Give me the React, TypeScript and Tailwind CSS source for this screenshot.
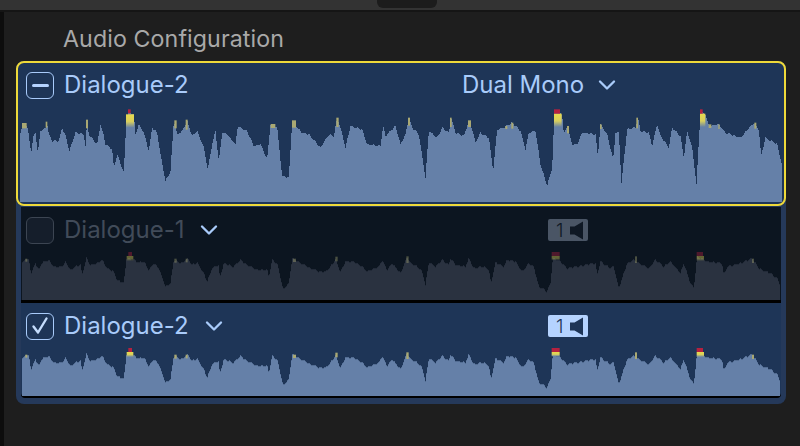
import React, { useId } from 'react';
import { ChevronDown } from 'lucide-react';

type Pt = [number, number];
type Tip = [number, number, number, number, string];

const Y = '#a9a873';
const H = 'hot';
const R = '#b5213f';

const topWave: Pt[] = [
    [60, 395], [66, 370], [80, 375], [85, 405], [92, 455], [98, 410], [105, 395], [112, 455], [120, 390], [135, 380], [140, 365], [145, 400], [155, 420], [175, 420], [185, 380], [195, 405], [207, 450], [225, 395], [250, 400], [255, 435], [260, 360], [265, 400], [290, 430], [300, 370], [310, 405], [315, 430], [335, 445], [340, 500], [350, 460], [370, 515], [378, 350], [385, 335], [400, 340], [405, 400], [415, 370], [430, 395], [445, 450], [455, 380], [470, 395], [480, 460], [495, 540], [510, 510], [520, 360], [530, 400], [545, 390], [560, 360], [575, 405], [590, 390], [610, 440], [622, 505], [635, 430], [645, 390], [655, 480], [665, 395], [680, 400], [705, 430], [712, 375], [740, 390], [760, 435], [780, 430], [800, 475], [810, 370], [830, 380], [845, 525], [865, 530], [875, 360], [890, 380], [905, 395], [925, 400], [960, 440], [985, 400], [1000, 405], [1010, 350], [1020, 380], [1035, 440], [1050, 375], [1085, 385], [1100, 430], [1140, 435], [1148, 375], [1155, 405], [1185, 375],
    [1200, 430], [1215, 400], [1225, 350], [1235, 380], [1255, 400], [1265, 465], [1275, 530], [1285, 390], [1310, 410], [1325, 380], [1345, 395], [1352, 350], [1365, 395], [1390, 405], [1405, 360], [1415, 385], [1425, 425], [1440, 395], [1465, 410], [1478, 510], [1490, 385], [1510, 380], [1535, 365], [1560, 390], [1575, 445], [1585, 395], [1605, 390], [1620, 490], [1640, 555], [1655, 500], [1662, 330], [1685, 340], [1690, 400], [1700, 375], [1715, 430], [1730, 430], [1745, 395], [1785, 400], [1792, 465], [1800, 370], [1820, 400], [1838, 475], [1845, 395], [1855, 395], [1863, 545], [1880, 385], [1905, 380], [1912, 350], [1920, 390], [1945, 395], [1955, 435], [1970, 370], [1980, 405], [2005, 440], [2015, 380], [2040, 405], [2050, 470], [2060, 390], [2075, 440], [2088, 550], [2100, 330], [2115, 340], [2125, 375], [2155, 370], [2175, 395], [2220, 410], [2260, 365], [2275, 385], [2282, 465], [2295, 410], [2330, 430], [2345, 495],
];

const topTips: Tip[] = [
    [66, 366, 14, 16, Y], [137, 362, 5, 18, Y], [258, 356, 6, 26, Y], [378, 340, 24, 40, H], [384, 325, 8, 12, R], [523, 358, 7, 24, Y], [557, 356, 6, 30, Y], [812, 369, 14, 12, Y], [876, 358, 12, 22, Y], [1009, 350, 7, 28, Y], [1224, 350, 6, 24, Y], [1350, 350, 5, 28, Y], [1404, 358, 9, 20, Y], [1516, 375, 6, 9, Y], [1534, 365, 6, 18, Y], [1662, 338, 23, 40, H], [1662, 325, 18, 13, R], [1701, 375, 6, 22, Y], [1800, 370, 5, 14, Y], [1909, 350, 5, 32, Y], [2100, 338, 16, 40, H], [2100, 325, 8, 13, R], [2126, 370, 8, 11, Y], [2155, 370, 4, 14, Y], [2263, 365, 6, 18, Y],
];

const lowerWave: Pt[] = [
    [66, 480], [75, 465], [85, 470], [92, 510], [105, 480], [115, 500], [125, 478], [145, 470], [160, 490], [185, 490], [195, 475], [210, 500], [225, 490], [240, 485], [245, 515], [258, 465], [270, 485], [290, 480], [305, 470], [320, 495], [340, 505], [350, 530], [370, 540], [378, 465], [400, 470], [415, 478], [430, 475], [445, 500], [460, 480], [475, 495], [495, 550], [510, 540], [520, 470], [545, 480], [560, 465], [575, 485], [590, 478], [610, 510], [620, 535], [635, 495], [655, 485], [658, 525], [670, 480], [700, 490], [720, 470], [740, 485], [770, 500], [800, 500], [805, 520], [815, 470], [830, 480], [848, 558], [865, 540], [875, 465], [900, 480], [930, 495], [955, 505], [975, 505], [990, 490], [1005, 470], [1020, 505], [1035, 475], [1060, 475], [1085, 490], [1100, 505], [1135, 490], [1145, 470], [1160, 500], [1175, 480],
    [1200, 510], [1220, 460], [1230, 480], [1250, 490], [1265, 505], [1275, 545], [1285, 478], [1305, 490], [1325, 470], [1345, 485], [1350, 465], [1365, 485], [1395, 490], [1405, 465], [1420, 495], [1450, 490], [1465, 500], [1472, 540], [1485, 478], [1510, 490], [1520, 470], [1545, 475], [1565, 505], [1585, 480], [1600, 490], [1615, 550], [1640, 565], [1650, 540], [1657, 465], [1680, 475], [1700, 495], [1730, 490], [1755, 485], [1785, 480], [1790, 515], [1800, 475], [1830, 495], [1840, 490], [1855, 555], [1880, 480], [1900, 470], [1915, 480], [1945, 495], [1965, 470], [1990, 490], [2010, 475], [2040, 510], [2050, 480], [2070, 540], [2080, 555], [2090, 460], [2120, 475], [2165, 480], [2170, 515], [2180, 490], [2220, 480], [2255, 465], [2275, 495], [2310, 510], [2330, 525], [2338, 545],
];

const lowerTips: Tip[] = [
    [76, 466, 6, 9, Y], [380, 458, 20, 15, H], [385, 446, 11, 12, R], [523, 466, 7, 12, Y], [557, 466, 6, 11, Y], [879, 466, 9, 10, Y], [1006, 460, 7, 14, Y], [1219, 459, 7, 20, Y], [1655, 458, 24, 13, H], [1655, 446, 24, 12, R], [1905, 459, 6, 20, Y], [2090, 458, 22, 15, H], [2090, 446, 19, 12, R], [2256, 466, 6, 13, Y],
];

// one sample per screen pixel, with a little noise, so the outline comes out stepped like the real meter
const stepPath = (pts: Pt[], bottom: number) => {
    let d = `M${pts[0][0]} ${bottom}`;
    let i = 0;
    for (let x = pts[0][0]; x < pts[pts.length - 1][0]; x += 3) {
        while (i < pts.length - 2 && pts[i + 1][0] <= x) i++;
        const [x0, y0] = pts[i];
        const [x1, y1] = pts[i + 1];
        const y = y0 + ((y1 - y0) * (x - x0)) / (x1 - x0) + Math.sin(x * 1.7) * 2;
        d += `V${Math.round(y / 3) * 3}H${x + 3}`;
    }
    return d + `V${bottom}Z`;
};

const Wave: React.FC<{ pts: Pt[]; tips: Tip[]; box: [number, number, number, number]; fill: string; tipOpacity?: number; className: string }> = ({ pts, tips, box, fill, tipOpacity = 1, className }) => {
    const id = useId();
    return (
        <svg viewBox={box.join(' ')} preserveAspectRatio="none" className={className}>
            <defs>
                <linearGradient id={id} x1="0" y1="0" x2="0" y2="1">
                    <stop offset="0" stopColor="#e8da4c" />
                    <stop offset="0.55" stopColor="#d8cf5e" />
                    <stop offset="1" stopColor={fill} />
                </linearGradient>
            </defs>
            <path d={stepPath(pts, box[1] + box[3])} fill={fill} />
            <g opacity={tipOpacity}>
                {tips.map((t, i) => (
                    <rect key={i} x={t[0]} y={t[1]} width={t[2]} height={t[3]} fill={t[4] === H ? `url(#${id})` : t[4]} />
                ))}
            </g>
        </svg>
    );
};

const Badge: React.FC<{ bg: string; fg: string }> = ({ bg, fg }) => (
    <div className="mr-[193px] ml-auto flex h-[22px] w-[40px] items-center rounded-[2px] pl-[8px]" style={{ backgroundColor: bg }}>
        <span className="w-[14px] text-[19px] leading-none font-light" style={{ color: fg }}>1</span>
        <svg width="13" height="19" viewBox="0 0 13 19">
            <path d="M0 5.5H4.5L13 0.5V18.5L4.5 13.5H0Z" fill={fg} />
        </svg>
    </div>
);

const App: React.FC = () => {
    return (
        <div className="flex h-[446px] w-[800px] flex-col overflow-hidden bg-[#1e1e1e] font-['Inter',sans-serif]">
            {/* top bar */}
            <div className="flex h-[12px] shrink-0 border-b-2 border-[#151515] bg-[#333333] pl-[377px]">
                <div className="h-[8px] w-[60px] rounded-b-[6px] bg-[#1c1c1c]" />
            </div>

            <div className="flex flex-1 border-l-[4px] border-[#0d0d0d]">
                <div className="pl-[12px]">
                    <div className="pt-[13px] pl-[47px] text-[23.2px] leading-[28px] tracking-[0.1px] text-[#a9a9a9]">Audio Configuration</div>

                    <div className="mt-[8px] w-[770px] rounded-[8px] bg-[#25395a] pb-[6px]">
                        {/* selected clip */}
                        <div className="flex h-[145px] flex-col rounded-[8px] border-2 border-[#eed93a] bg-[#1e3557] px-[2px] pb-[2px]">
                            <div className="flex items-center pt-[8px] pl-[6px]">
                                <div className="flex h-[27px] w-[28px] items-center justify-center rounded-[6px] border-[1.5px] border-[#a9cbfa]">
                                    <div className="h-[3px] w-[17px] rounded-full bg-[#b5d3ff]" />
                                </div>
                                <span className="ml-[10px] w-[398px] text-[24px] leading-[28px] text-[#a9cbfa]">Dialogue-2</span>
                                <span className="text-[24px] leading-[28px] text-[#a9cbfa]">Dual Mono</span>
                                <ChevronDown size={28} strokeWidth={2} className="ml-[9px] text-[#a9cbfa]" />
                            </div>
                            <Wave pts={topWave} tips={topTips} box={[60, 324, 2289, 279]} fill="#6580a8" className="mt-auto block h-[93px] w-[763px]" />
                        </div>

                        <div className="mx-[5px] mt-[1px] flex flex-col gap-[3px] rounded-b-[4px] bg-black pb-[2px]">
                            {/* muted component */}
                            <div className="flex h-[93px] flex-col bg-[#0c1520] pl-[1px]">
                                <div className="flex items-center pt-[9px] pl-[4px]">
                                    <div className="h-[27px] w-[28px] rounded-[6px] border-[1.5px] border-[#3c4552] bg-[#151e2b]" />
                                    <span className="ml-[10px] text-[24px] leading-[28px] text-[#414b59]">Dialogue-1</span>
                                    <ChevronDown size={28} strokeWidth={2} className="ml-[10px] text-[#a9cbfa]" />
                                    <Badge bg="#4a5565" fg="#0f1824" />
                                </div>
                                <Wave pts={lowerWave} tips={lowerTips} box={[66, 440, 2274, 150]} fill="#2a3240" tipOpacity={0.4} className="mt-auto block h-[50px] w-[758px]" />
                            </div>

                            {/* active component */}
                            <div className="flex h-[93px] flex-col rounded-b-[3px] bg-[#1e3557] pl-[1px]">
                                <div className="flex items-center pt-[9px] pl-[4px]">
                                    <div className="flex h-[27px] w-[28px] items-center justify-center rounded-[6px] border-[1.5px] border-[#a9cbfa]">
                                        <svg width="20" height="20" viewBox="0 0 20 20" fill="none" stroke="#c4dcfc" strokeWidth="2.4" strokeLinecap="round" strokeLinejoin="round">
                                            <path d="M3.5 10.5L8 16.5L16.5 2.5" />
                                        </svg>
                                    </div>
                                    <span className="ml-[10px] text-[24px] leading-[28px] text-[#a9cbfa]">Dialogue-2</span>
                                    <ChevronDown size={28} strokeWidth={2} className="ml-[11px] text-[#a9cbfa]" />
                                    <Badge bg="#b5d3ff" fg="#1e3557" />
                                </div>
                                <Wave pts={lowerWave} tips={lowerTips} box={[66, 440, 2274, 150]} fill="#6580a8" className="mt-auto block h-[50px] w-[758px]" />
                            </div>
                        </div>
                    </div>
                </div>
            </div>
        </div>
    );
};

export default App;
